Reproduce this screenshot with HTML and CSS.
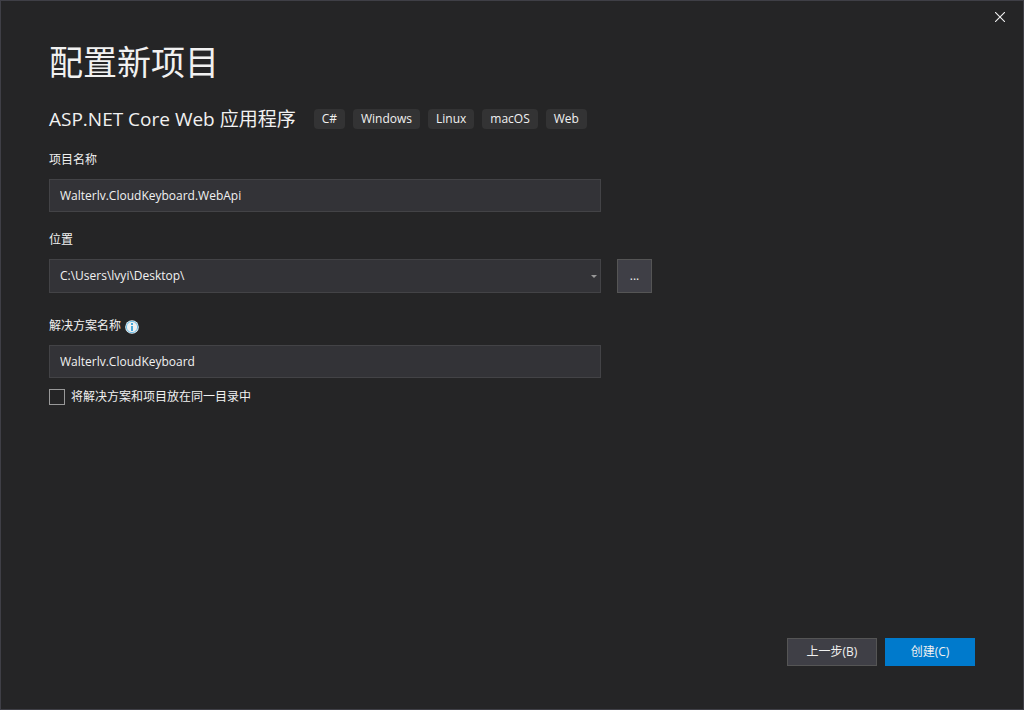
FILE: index.html
```html
<!DOCTYPE html>
<html lang="zh-CN">
<head>
    <meta charset="UTF-8">
    <meta name="viewport" content="width=device-width, initial-scale=1.0">
    <title>配置新项目</title>
    <link rel="stylesheet" href="styles.css">
</head>
<body>
    <div class="window">
        <button type="button" class="close" aria-label="关闭">
            <svg width="10" height="10" viewBox="0 0 10 10">
                <path d="M0 0L10 10M10 0L0 10" stroke="#f1f1f1" stroke-width="1.1"/>
            </svg>
        </button>

        <h1>配置新项目</h1>

        <div class="template">
            <h2>ASP.NET Core Web 应用程序</h2>
            <ul class="tags">
                <li>C#</li>
                <li>Windows</li>
                <li>Linux</li>
                <li>macOS</li>
                <li>Web</li>
            </ul>
        </div>

        <form id="projectForm">
            <div class="form-group">
                <label for="projectName">项目名称</label>
                <input type="text" id="projectName" value="Walterlv.CloudKeyboard.WebApi" spellcheck="false">
            </div>

            <div class="form-group location">
                <label for="location">位置</label>
                <div class="location-row">
                    <div class="select">
                        <select id="location">
                            <option>C:\Users\lvyi\Desktop\</option>
                        </select>
                        <svg class="arrow" width="6" height="3" viewBox="0 0 6 3">
                            <path d="M0 0H6L3 3Z" fill="#999999"/>
                        </svg>
                    </div>
                    <button type="button" class="btn btn-browse">...</button>
                </div>
            </div>

            <div class="form-group solution">
                <div class="label-row">
                    <label for="solutionName">解决方案名称</label>
                    <svg class="info" width="14" height="14" viewBox="0 0 14 14">
                        <circle cx="7" cy="7" r="6.8" fill="#e8f3f9"/>
                        <circle cx="7" cy="7" r="5.6" fill="#f0f0f0" stroke="#6dbbe2" stroke-width="1"/>
                        <path d="M6 3H8V5H6ZM6 6H8V11H6Z" fill="#4aa8da"/>
                    </svg>
                </div>
                <input type="text" id="solutionName" value="Walterlv.CloudKeyboard" spellcheck="false">
            </div>

            <div class="check">
                <input type="checkbox" id="sameFolder">
                <label for="sameFolder">将解决方案和项目放在同一目录中</label>
            </div>
        </form>

        <div class="actions">
            <button type="button" class="btn">上一步(B)</button>
            <button type="submit" form="projectForm" class="btn btn-primary">创建(C)</button>
        </div>
    </div>
</body>
</html>
```
FILE: styles.css
```css
* {
    margin: 0;
    padding: 0;
    box-sizing: border-box;
}

body {
    font-family: "Open Sans", "Noto Sans CJK SC", sans-serif;
    font-size: 12px;
    line-height: 16px;
    background: #252526;
    color: #f1f1f1;
}

.window {
    position: relative;
    display: flex;
    flex-direction: column;
    min-height: 100vh;
    padding: 37px 48px 43px;
    border: 1px solid #3f3f46;
}

.close {
    position: absolute;
    top: 0;
    right: 0;
    display: flex;
    align-items: center;
    justify-content: center;
    width: 46px;
    height: 32px;
    border: none;
    background: none;
    cursor: pointer;
}

h1 {
    font-size: 34px;
    line-height: 48px;
    font-weight: normal;
}

.template {
    display: flex;
    align-items: center;
    gap: 18px;
    margin: 19px 0;
}

h2 {
    font-size: 19px;
    line-height: 28px;
    font-weight: normal;
    white-space: nowrap;
}

.tags {
    display: flex;
    gap: 8px;
    list-style: none;
}

.tags li {
    padding: 0 8px;
    line-height: 20px;
    font-weight: 500;
    border-radius: 4px;
    background: #333334;
}

.form-group {
    max-width: 552px;
    margin-bottom: 20px;
}

.form-group label {
    display: block;
    margin-bottom: 11px;
}

.form-group.location {
    margin-bottom: 25px;
}

.form-group.solution {
    margin-bottom: 11px;
}

input[type="text"],
select {
    display: block;
    width: 100%;
    height: 33px;
    padding: 0 10px;
    font: inherit;
    font-weight: 500;
    color: #f1f1f1;
    background: #333337;
    border: 1px solid #434346;
    border-radius: 0;
    outline: none;
    appearance: none;
}

input[type="text"]:focus,
select:focus {
    border-color: #007acc;
}

.location-row {
    display: flex;
    gap: 16px;
    margin-right: -51px;
}

.select {
    position: relative;
    flex: 1;
}

.select select {
    height: 34px;
}

.arrow {
    position: absolute;
    top: 16px;
    right: 4px;
    pointer-events: none;
}

.label-row {
    display: flex;
    gap: 4px;
}

.info {
    margin-top: 2px;
}

.check {
    display: flex;
    align-items: center;
    gap: 6px;
}

.check input {
    width: 16px;
    height: 16px;
    border: 1px solid #999999;
    background: #252526;
    appearance: none;
}

.check input:checked {
    background: #007acc;
}

.actions {
    display: flex;
    justify-content: flex-end;
    gap: 8px;
    margin-top: auto;
}

.btn {
    width: 90px;
    height: 28px;
    font: inherit;
    color: #f1f1f1;
    background: #3f3f46;
    border: 1px solid #555555;
    cursor: pointer;
}

.btn-browse {
    width: 35px;
    height: 34px;
}

.btn-primary {
    background: #007acc;
    border-color: #007acc;
}
```
